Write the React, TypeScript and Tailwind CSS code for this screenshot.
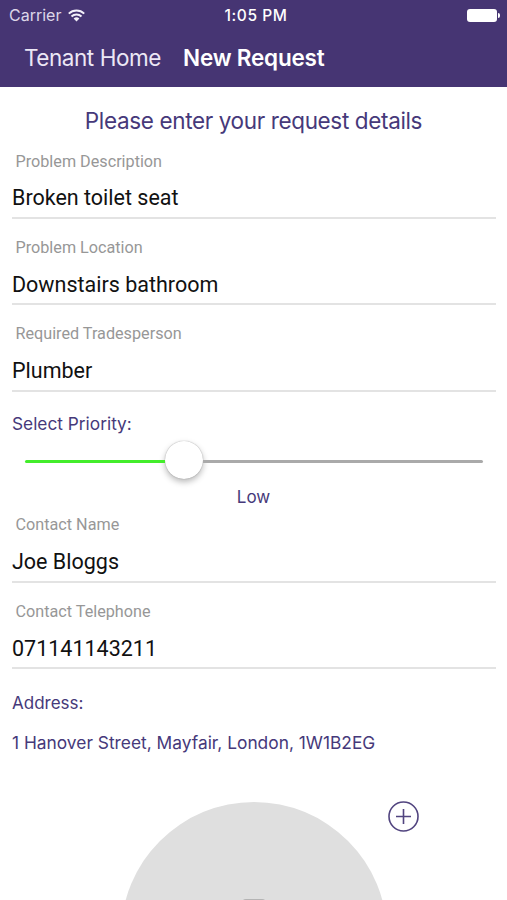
import React from "react";

type FieldProps = { label: string; value: string };

function Field({ label, value }: FieldProps) {
  return (
    <div className="flex h-[86.3px] flex-col pl-3 pr-[11px] font-[Roboto,sans-serif]">
      <label className="h-6 pl-[3.5px] text-[16.2px] leading-6 text-[#979797]">{label}</label>
      <div className="flex h-[45.5px] items-center border-b-2 border-[#e3e3e3] pt-[6px] text-[21.5px] leading-6 text-[#111]">
        {value}
      </div>
    </div>
  );
}

function WifiIcon() {
  return (
    <svg className="ml-[7px] h-[13px] w-[17px]" viewBox="0 0 17 13" fill="none" stroke="#f4f1fa" strokeWidth="2">
      <path d="M.8 4.6a11 11 0 0 1 15.4 0M3.5 7.5a7.2 7.2 0 0 1 10 0" />
      <path d="M8.5 12.5 5.6 9.6a4.1 4.1 0 0 1 5.8 0Z" fill="#f4f1fa" stroke="none" />
    </svg>
  );
}

function Battery() {
  return (
    <div className="flex items-center gap-px">
      <div className="h-[13px] w-[30px] rounded-[3px] bg-white" />
      <div className="h-[5px] w-[2px] rounded-r-full bg-white" />
    </div>
  );
}

export default function App() {
  return (
    <div className="h-[900px] w-full overflow-hidden bg-white font-[Inter,sans-serif] text-[#46397a]">
      <header className="h-[87.4px] bg-[#463573] text-white">
        <div className="grid h-[29px] grid-cols-3 items-center pl-[9px] pr-[7px] text-[16px] leading-[29px]">
          <div className="flex items-center text-[#dcd6e8]">
            <span>Carrier</span>
            <WifiIcon />
          </div>
          <span className="pl-[3px] pt-px text-center text-[15.5px] font-medium tracking-[0.55px]">1:05 PM</span>
          <div className="flex justify-end"><Battery /></div>
        </div>
        <nav className="flex h-[57px] items-center pl-6 text-[22.5px] leading-[57px]">
          <span className="w-[159px] whitespace-nowrap tracking-[-0.45px] text-[#ece7f5]">Tenant Home</span>
          <h1 className="whitespace-nowrap font-semibold tracking-[-0.2px]">New Request</h1>
        </nav>
      </header>

      <main>
        <h2 className="h-[62.2px] pt-[17.5px] text-center text-[22.5px] leading-8 tracking-[-0.36px]">Please enter your request details</h2>

        <Field label="Problem Description" value="Broken toilet seat" />
        <Field label="Problem Location" value="Downstairs bathroom" />
        <Field label="Required Tradesperson" value="Plumber" />

        <section className="h-[105px]">
          <div className="h-[31px] pl-3 pt-[3.5px] text-[17.3px] leading-6">Select Priority:</div>
          <div className="ml-[25px] mr-6 flex h-[42px] items-center">
            <div className="h-[3px] w-[140px] translate-y-px rounded-l-full bg-[#43ed2b]" />
            <div className="h-[38px] w-[38px] shrink-0 rounded-full bg-white shadow-[0_3px_6px_rgba(0,0,0,0.28),0_0_1px_rgba(0,0,0,0.4)]" />
            <div className="h-[3px] flex-1 translate-y-px rounded-r-full bg-[#aaa]" />
          </div>
          <div className="pt-[3.3px] text-center text-[17px] leading-6">Low</div>
        </section>

        <Field label="Contact Name" value="Joe Bloggs" />
        <Field label="Contact Telephone" value="071141143211" />

        <section className="h-[116.3px] pl-3">
          <p className="pt-[5.4px] text-[17px] leading-6">Address:</p>
          <p className="pt-4 text-[17.35px] leading-6">1 Hanover Street, Mayfair, London, 1W1B2EG</p>
        </section>

        <div className="flex pl-[121px]">
          <div className="flex h-[266px] w-[266px] shrink-0 justify-center rounded-full bg-[#dfdfdf] pt-[97px]">
            <div className="h-[60px] w-6 rounded-t-sm bg-[#b4b4b4]" />
          </div>
          <button aria-label="Add photo" className="-mt-px ml-px h-[31px] w-[31px]">
            <svg viewBox="0 0 31 31" fill="none" stroke="#51447f" strokeWidth="1.6">
              <circle cx="15.5" cy="15.5" r="14.5" />
              <path d="M8 15.5h15M15.5 8v15" />
            </svg>
          </button>
        </div>
      </main>
    </div>
  );
}
